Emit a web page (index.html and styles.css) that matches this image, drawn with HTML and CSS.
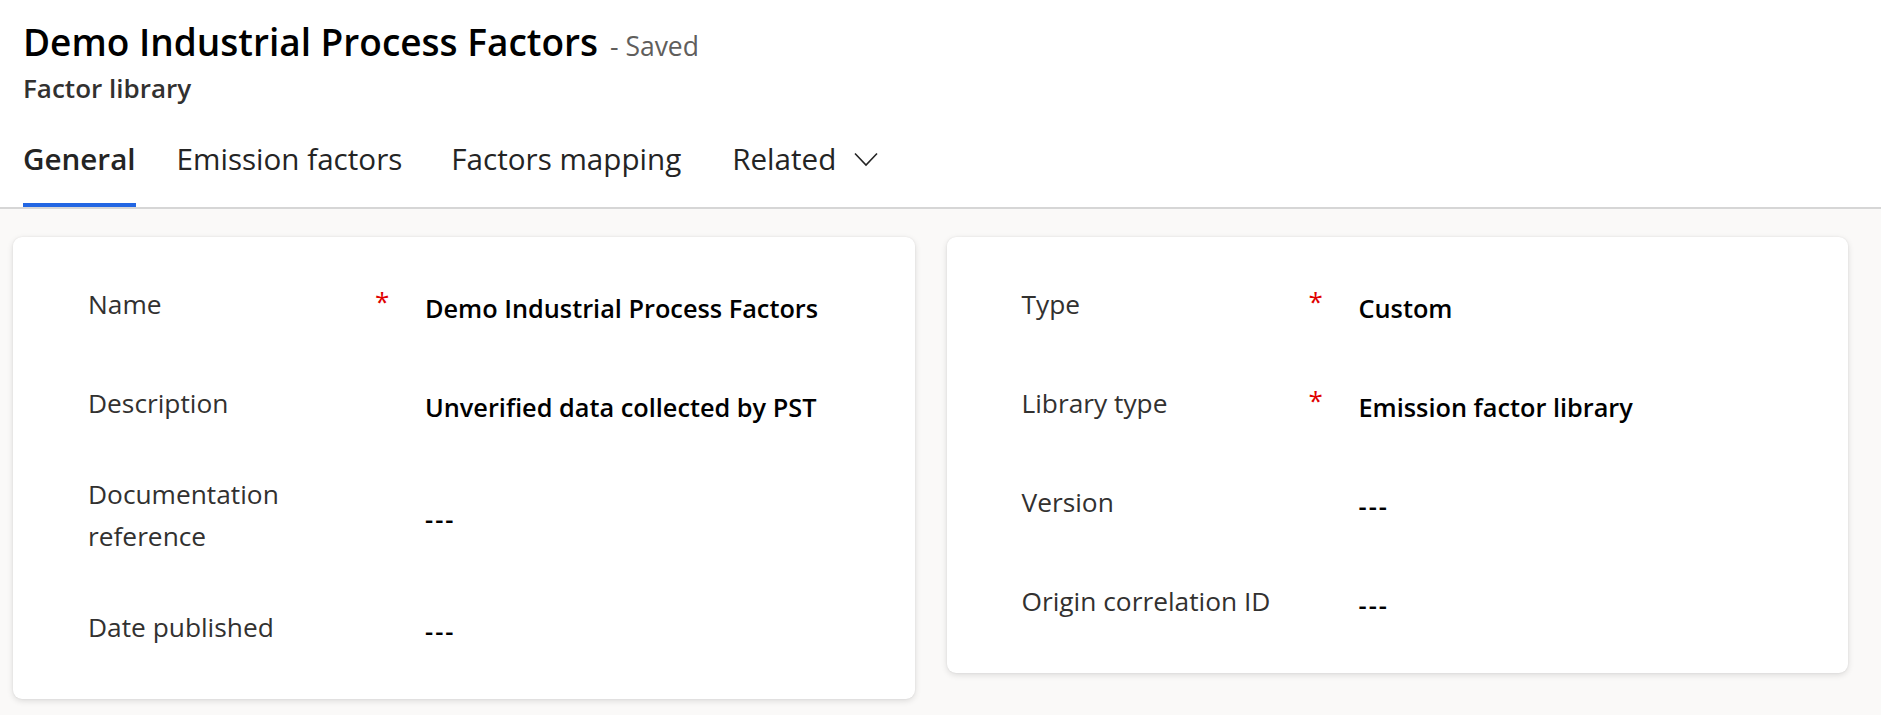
FILE: index.html
```html
<!DOCTYPE html>
<html lang="en">
<head>
<meta charset="utf-8">
<title>Demo Industrial Process Factors - Saved</title>
<link rel="stylesheet" href="styles.css">
</head>
<body>
  <header class="header">
    <div class="title-row">
      <h1 class="title">Demo Industrial Process Factors</h1>
      <span class="saved">- Saved</span>
    </div>
    <div class="subtitle">Factor library</div>
    <nav class="tabs">
      <div class="tab active">General</div>
      <div class="tab">Emission factors</div>
      <div class="tab">Factors mapping</div>
      <div class="tab tab-menu">Related
        <svg class="chevron" width="24" height="15" viewBox="0 0 24 15" aria-hidden="true">
          <polyline points="1,1.5 12,13 23,1.5" fill="none" stroke="#242424" stroke-width="1.6" stroke-linejoin="miter"/>
        </svg>
      </div>
    </nav>
  </header>

  <main class="content">
    <section class="card">
      <div class="row">
        <div class="label">Name</div>
        <div class="req">*</div>
        <div class="value">Demo Industrial Process Factors</div>
      </div>
      <div class="row">
        <div class="label">Description</div>
        <div class="req"></div>
        <div class="value">Unverified data collected by PST</div>
      </div>
      <div class="row">
        <div class="label">Documentation<br>reference</div>
        <div class="req"></div>
        <div class="value empty">---</div>
      </div>
      <div class="row">
        <div class="label">Date published</div>
        <div class="req"></div>
        <div class="value empty">---</div>
      </div>
    </section>

    <section class="card">
      <div class="row">
        <div class="label">Type</div>
        <div class="req">*</div>
        <div class="value">Custom</div>
      </div>
      <div class="row">
        <div class="label">Library type</div>
        <div class="req">*</div>
        <div class="value">Emission factor library</div>
      </div>
      <div class="row">
        <div class="label">Version</div>
        <div class="req"></div>
        <div class="value empty">---</div>
      </div>
      <div class="row">
        <div class="label">Origin correlation ID</div>
        <div class="req"></div>
        <div class="value empty">---</div>
      </div>
    </section>
  </main>
</body>
</html>
```

FILE: styles.css
```css
* {
  box-sizing: border-box;
}

html, body {
  margin: 0;
  padding: 0;
}

body {
  background: #faf9f8;
  font-family: "Open Sans", "Noto Sans", "Liberation Sans", sans-serif;
  color: #242424;
  min-height: 715px;
}

.header {
  background: #ffffff;
  padding: 18px 0 0 23px;
  border-bottom: 2px solid #d6d6d6;
}

.title-row {
  display: flex;
  align-items: baseline;
  gap: 12px;
  height: 48px;
}

.title {
  margin: 0;
  font-size: 37px;
  line-height: 48px;
  font-weight: 600;
  color: #000000;
}

.saved {
  font-size: 26.5px;
  line-height: 48px;
  font-weight: 400;
  color: #605e5c;
}

.subtitle {
  margin-top: 4px;
  font-size: 26px;
  line-height: 36px;
  font-weight: 600;
  color: #323130;
}

.tabs {
  display: flex;
  margin-top: 33px;
}

.tab {
  display: flex;
  align-items: center;
  gap: 18px;
  font-size: 29.6px;
  line-height: 40px;
  font-weight: 400;
  color: #242424;
  padding-bottom: 24px;
  border-bottom: 4px solid transparent;
  margin-right: 49px;
}

.tab.active {
  font-weight: 600;
  border-bottom-color: #2266e3;
  margin-right: 41px;
}

.tab-menu {
  margin-left: 2px;
}

.chevron {
  display: block;
}

.content {
  display: grid;
  grid-template-columns: 1fr 1fr;
  gap: 32px;
  align-items: start;
  padding: 28px 33px 0 13px;
}

.card {
  background: #ffffff;
  border-radius: 9px;
  box-shadow: 0 2px 6px rgba(0, 0, 0, 0.12), 0 0 2px rgba(0, 0, 0, 0.08);
  padding: 38px 20px 43px 75px;
  display: flex;
  flex-direction: column;
  gap: 41px;
}

.row {
  display: grid;
  grid-template-columns: 287px 50px 1fr;
  align-items: center;
  min-height: 58px;
}

.label {
  font-size: 26.3px;
  line-height: 42px;
  font-weight: 400;
  color: #323130;
}

.req {
  font-size: 26px;
  line-height: 42px;
  padding-bottom: 6px;
  color: #e00000;
}

.value {
  padding-top: 8px;
  font-size: 25.3px;
  line-height: 42px;
  font-weight: 600;
  color: #000000;
}

.value.empty {
  letter-spacing: 2px;
}
```
